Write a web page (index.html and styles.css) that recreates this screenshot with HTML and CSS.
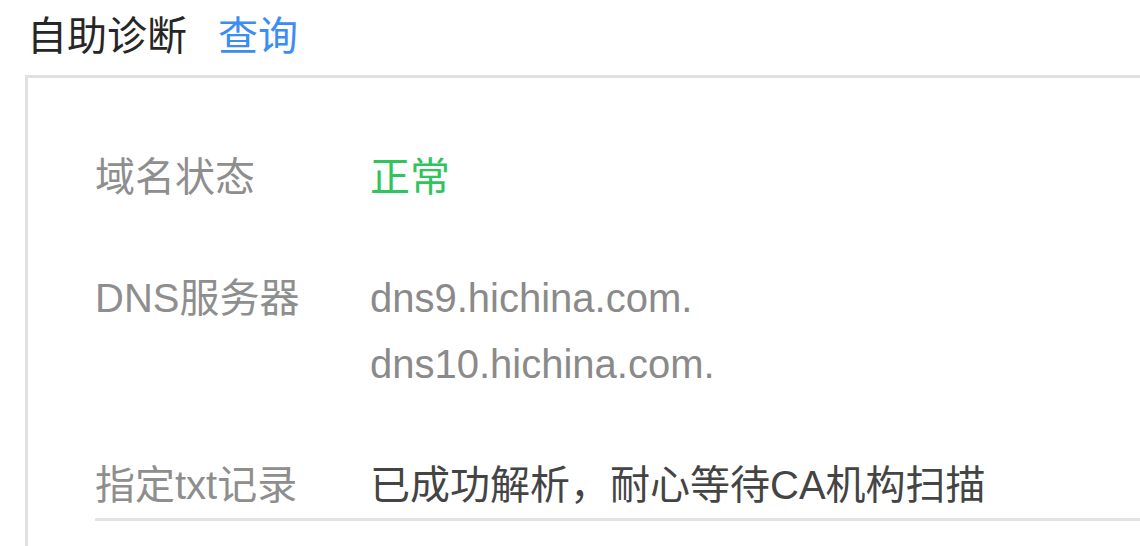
FILE: index.html
```html
<!DOCTYPE html>
<html lang="zh-CN">
<head>
<meta charset="utf-8">
<title>自助诊断</title>
<link rel="stylesheet" href="styles.css">
</head>
<body>
<div class="page">
  <div class="header">
    <span class="title">自助诊断</span>
    <a class="query">查询</a>
  </div>
  <div class="panel">
    <div class="list">
      <div class="row">
        <div class="label">域名状态</div>
        <div class="value ok">正常</div>
      </div>
      <div class="row">
        <div class="label">DNS服务器</div>
        <div class="value muted">
          <div>dns9.hichina.com.</div>
          <div>dns10.hichina.com.</div>
        </div>
      </div>
      <div class="row">
        <div class="label">指定txt记录</div>
        <div class="value dark">已成功解析，耐心等待CA机构扫描</div>
      </div>
    </div>
  </div>
</div>
</body>
</html>
```
FILE: styles.css
```css
html, body {
  margin: 0;
  padding: 0;
  background: #fff;
  overflow: hidden;
}
.page {
  font-family: "Liberation Sans", "Noto Sans CJK SC", sans-serif;
  font-size: 40px;
  width: 1140px;
  height: 546px;
  overflow: hidden;
}
.header {
  display: flex;
  align-items: center;
  height: 66px;
  padding-left: 27px;
  margin-bottom: 9px;
}
.title {
  color: #262626;
}
.query {
  color: #3b8cf5;
  margin-left: 31px;
}
.panel {
  margin-left: 25px;
  margin-right: -40px;
  border-top: 3px solid #e0e0e0;
  border-left: 3px solid #e0e0e0;
  padding-top: 66px;
  padding-left: 67px;
  height: 600px;
}
.list {
  display: flex;
  flex-direction: column;
  gap: 55px;
  border-bottom: 3px solid #e3e3e3;
}
.row {
  display: flex;
  line-height: 66px;
}
.label {
  width: 275px;
  flex-shrink: 0;
  color: #8e8e8e;
}
.value.ok {
  color: #2fc45c;
}
.value.muted {
  color: #8a8a8a;
}
.value.dark {
  color: #444;
}
```
